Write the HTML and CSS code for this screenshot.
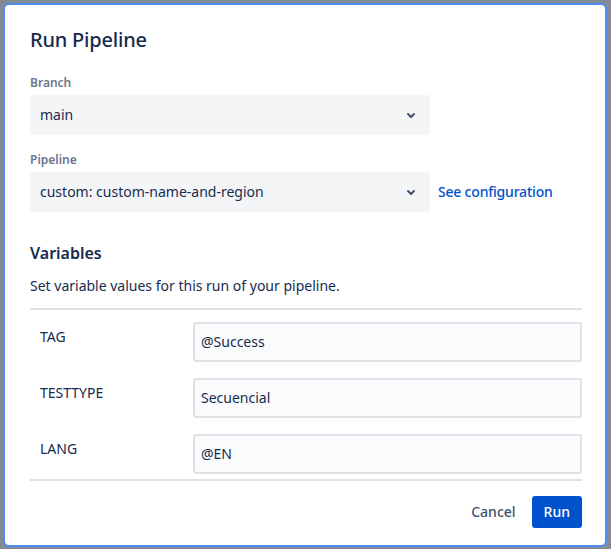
FILE: index.html
```html
<!DOCTYPE html>
<html lang="en">
<head>
<meta charset="utf-8">
<title>Run Pipeline</title>
<link rel="stylesheet" href="styles.css">
</head>
<body>
<div class="dialog">
  <h1 class="title">Run Pipeline</h1>

  <div class="field">
    <div class="label">Branch</div>
    <div class="field-row">
      <div class="select">
        <span class="select-value">main</span>
        <svg class="chevron" width="24" height="24" viewBox="0 0 24 24"><path fill="currentColor" d="M8.292 10.293a1.009 1.009 0 000 1.419l2.939 2.965c.218.215.5.322.779.322s.556-.107.769-.322l2.93-2.955a1.01 1.01 0 000-1.419.987.987 0 00-1.406 0l-2.298 2.317-2.307-2.327a.99.99 0 00-1.406 0z"/></svg>
      </div>
    </div>
  </div>

  <div class="field">
    <div class="label">Pipeline</div>
    <div class="field-row">
      <div class="select">
        <span class="select-value">custom: custom-name-and-region</span>
        <svg class="chevron" width="24" height="24" viewBox="0 0 24 24"><path fill="currentColor" d="M8.292 10.293a1.009 1.009 0 000 1.419l2.939 2.965c.218.215.5.322.779.322s.556-.107.769-.322l2.93-2.955a1.01 1.01 0 000-1.419.987.987 0 00-1.406 0l-2.298 2.317-2.307-2.327a.99.99 0 00-1.406 0z"/></svg>
      </div>
      <a class="link" href="#">See configuration</a>
    </div>
  </div>

  <h2 class="section-title">Variables</h2>
  <p class="desc">Set variable values for this run of your pipeline.</p>

  <div class="vars">
    <div class="var-row">
      <div class="var-name">TAG</div>
      <div class="input">@Success</div>
    </div>
    <div class="var-row">
      <div class="var-name">TESTTYPE</div>
      <div class="input">Secuencial</div>
    </div>
    <div class="var-row">
      <div class="var-name">LANG</div>
      <div class="input">@EN</div>
    </div>
  </div>

  <div class="footer">
    <button class="btn btn-subtle">Cancel</button>
    <button class="btn btn-primary">Run</button>
  </div>
</div>
</body>
</html>
```

FILE: styles.css
```css
* { box-sizing: border-box; }

html, body {
  margin: 0;
  height: 100%;
}

body {
  background: #838a96;
  padding: 3px 4px 2px 3px;
  font-family: "Noto Sans", "Open Sans", sans-serif;
  color: #172b4d;
  font-size: 14px;
  line-height: 20px;
}

.dialog {
  width: 604px;
  height: 544px;
  background: #fff;
  border: 2px solid #4f8ef0;
  border-radius: 6px;
  padding: 23px 23px 17px 25px;
  display: flex;
  flex-direction: column;
}

.title {
  margin: 0;
  font-size: 20px;
  line-height: 24px;
  font-weight: 500;
  color: #172b4d;
  letter-spacing: -0.2px;
}

.field {
  margin-top: 23px;
}
.field + .field {
  margin-top: 17px;
}

.label {
  font-size: 12px;
  line-height: 16px;
  font-weight: 600;
  color: #6b778c;
  margin-bottom: 4px;
}

.field-row {
  display: flex;
  align-items: center;
}

.select {
  width: 400px;
  height: 40px;
  background: #f4f5f7;
  border-radius: 3px;
  display: flex;
  align-items: center;
  justify-content: space-between;
  padding: 0 7px 0 10px;
}

.select-value {
  color: #172b4d;
}

.chevron {
  color: #42526e;
  display: block;
}

.link {
  margin-left: 8px;
  color: #0052cc;
  font-weight: 500;
  text-decoration: none;
  letter-spacing: -0.2px;
}

.section-title {
  margin: 31px 0 0 0;
  font-size: 16px;
  line-height: 20px;
  font-weight: 600;
  color: #172b4d;
}

.desc {
  margin: 13px 0 0 0;
  color: #172b4d;
}

.vars {
  margin-top: 12px;
  border-top: 2px solid #dfe1e6;
  border-bottom: 2px solid #dfe1e6;
  padding: 12px 0 5px 0;
  display: flex;
  flex-direction: column;
  gap: 16px;
}

.var-row {
  display: flex;
  align-items: flex-start;
}

.var-name {
  width: 163px;
  padding: 5px 0 0 10px;
  color: #172b4d;
}

.input {
  flex: 1;
  height: 40px;
  background: #fafbfc;
  border: 2px solid #dfe1e6;
  border-radius: 3px;
  padding: 8px 6px;
  color: #172b4d;
}

.footer {
  margin-top: auto;
  display: flex;
  justify-content: flex-end;
  gap: 4px;
}

.btn {
  font-family: inherit;
  font-size: 14px;
  font-weight: 500;
  height: 32px;
  line-height: 32px;
  padding: 0 12px;
  border: none;
  border-radius: 3px;
  cursor: pointer;
}

.btn-subtle {
  background: transparent;
  color: #42526e;
}

.btn-primary {
  background: #0052cc;
  color: #fff;
}
```
